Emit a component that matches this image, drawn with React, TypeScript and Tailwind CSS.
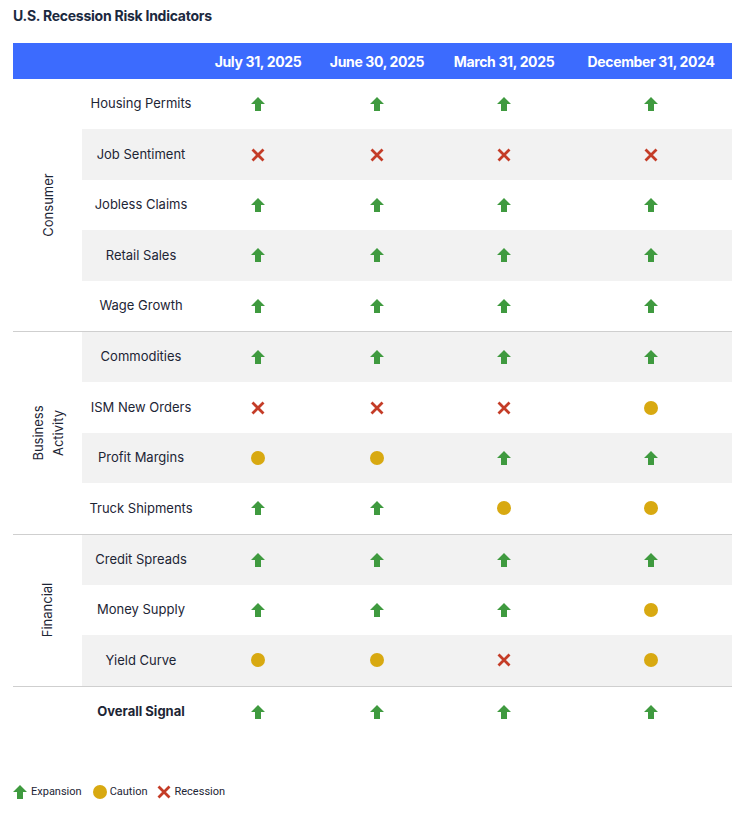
import React from "react";

type S = "up" | "x" | "c";

const Up = ({ size = 14 }: { size?: number }) => (
  <svg width={size} height={size} viewBox="0 0 14 14" className="block">
    <polygon points="7,0 14,7 10,7 10,14 4,14 4,7 0,7" fill="#3f9a3f" />
  </svg>
);
const X = ({ size = 14 }: { size?: number }) => (
  <svg width={size} height={size} viewBox="0 0 14 14" className="block">
    <path d="M1.5 1.5 L12.5 12.5 M12.5 1.5 L1.5 12.5" stroke="#c43c27" strokeWidth="2.8" strokeLinecap="butt" />
  </svg>
);
const C = ({ size = 14 }: { size?: number }) => (
  <svg width={size} height={size} viewBox="0 0 14 14" className="block">
    <circle cx="7" cy="7" r="7" fill="#d8a911" />
  </svg>
);

const Icon = ({ s }: { s: S }) => (s === "up" ? <Up /> : s === "x" ? <X /> : <C />);

const groups: { label: string[]; rows: [string, S[]][] }[] = [
  {
    label: ["Consumer"],
    rows: [
      ["Housing Permits", ["up", "up", "up", "up"]],
      ["Job Sentiment", ["x", "x", "x", "x"]],
      ["Jobless Claims", ["up", "up", "up", "up"]],
      ["Retail Sales", ["up", "up", "up", "up"]],
      ["Wage Growth", ["up", "up", "up", "up"]],
    ],
  },
  {
    label: ["Business", "Activity"],
    rows: [
      ["Commodities", ["up", "up", "up", "up"]],
      ["ISM New Orders", ["x", "x", "x", "c"]],
      ["Profit Margins", ["c", "c", "up", "up"]],
      ["Truck Shipments", ["up", "up", "c", "c"]],
    ],
  },
  {
    label: ["Financial"],
    rows: [
      ["Credit Spreads", ["up", "up", "up", "up"]],
      ["Money Supply", ["up", "up", "up", "c"]],
      ["Yield Curve", ["c", "c", "x", "c"]],
    ],
  },
];

const cols = "grid grid-cols-[118px_116px_122px_132px_162px]";

export default function App() {
  let idx = 0;
  return (
    <div
      className="w-[740px] h-[816px] bg-white text-[#1d2535]"
      style={{ fontFamily: "Inter, 'Liberation Sans', sans-serif" }}
    >
      <div className="pl-[13px] pt-[7px] text-[14px] font-bold text-[#1b2940] tracking-[-0.25px] leading-[18px]">
        U.S. Recession Risk Indicators
      </div>
      <div className="ml-[13px] mt-[18px] w-[719px]">
        <div className="grid grid-cols-[69px_650px] h-[36px] bg-[#3c6bfe]">
          <div />
          <div className={`${cols} items-center text-white text-[14px] font-bold tracking-[-0.35px]`}>
            <div />
            <div className="text-center">July 31, 2025</div>
            <div className="text-center">June 30, 2025</div>
            <div className="text-center">March 31, 2025</div>
            <div className="text-center">December 31, 2024</div>
          </div>
        </div>
        {groups.map((g, gi) => (
          <div key={gi} className="grid grid-cols-[69px_650px] border-b border-[#cfcfcf]">
            <div className="flex items-center justify-center">
              <div className="-rotate-90 whitespace-nowrap text-center text-[13px] leading-[20px]">
                {g.label.map((l) => (
                  <div key={l}>{l}</div>
                ))}
              </div>
            </div>
            <div>
              {g.rows.map(([name, sig]) => {
                const gray = idx++ % 2 === 1;
                return (
                  <div
                    key={name}
                    className={`${cols} h-[50.4px] items-center ${gray ? "bg-[#f2f2f2]" : "bg-white"}`}
                  >
                    <div className="text-center text-[13px]">{name}</div>
                    {sig.map((s, i) => (
                      <div key={i} className="flex justify-center">
                        <Icon s={s} />
                      </div>
                    ))}
                  </div>
                );
              })}
            </div>
          </div>
        ))}
        <div className="grid grid-cols-[69px_650px]">
          <div />
          <div className={`${cols} h-[50.4px] items-center`}>
            <div className="text-center text-[13px] font-bold">Overall Signal</div>
            {[0, 1, 2, 3].map((i) => (
              <div key={i} className="flex justify-center">
                <Up />
              </div>
            ))}
          </div>
        </div>
      </div>
      <div
        className="flex items-center ml-[13px] mt-[47px] text-[11px] text-[#1d2535]"
        style={{ fontFamily: "Roboto, 'Liberation Sans', sans-serif" }}
      >
        <Up />
        <span className="ml-[4px]">Expansion</span>
        <span className="ml-[11px]"><C /></span>
        <span className="ml-[3px]">Caution</span>
        <span className="ml-[9px]"><X /></span>
        <span className="ml-[4px]">Recession</span>
      </div>
    </div>
  );
}
